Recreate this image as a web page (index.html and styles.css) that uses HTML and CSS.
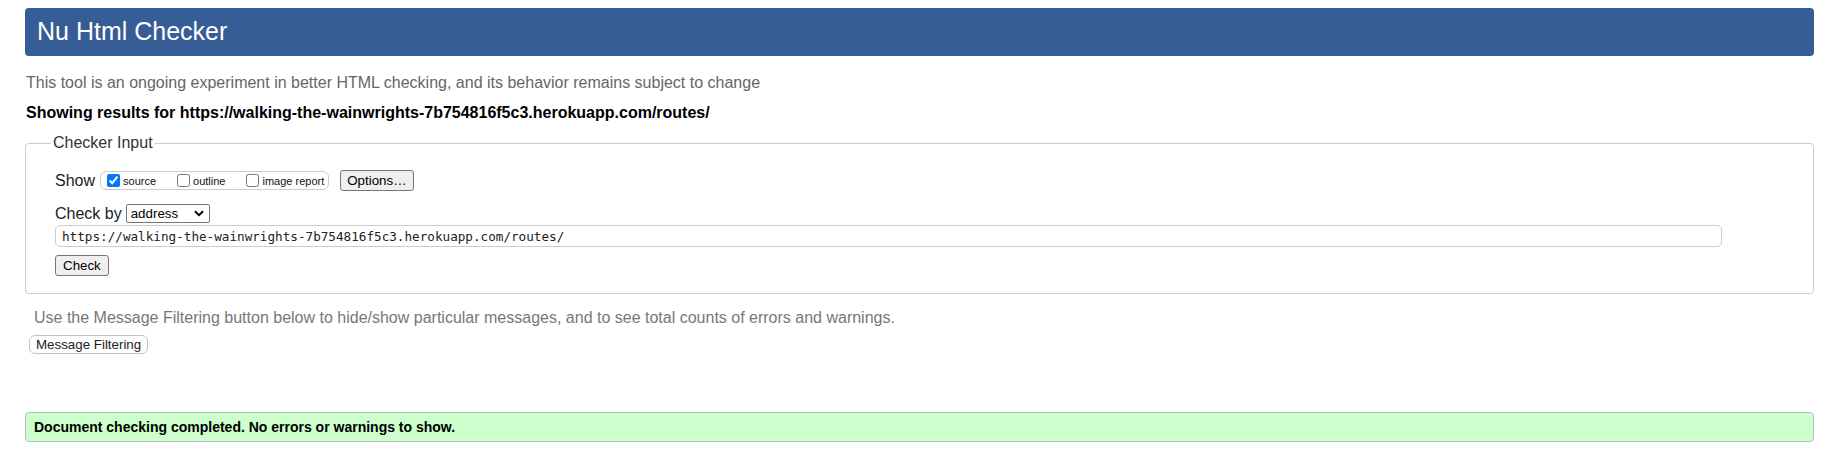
FILE: index.html
```html
<!DOCTYPE html>
<html lang="en">
<head>
<meta charset="utf-8">
<title>Nu Html Checker</title>
<link rel="stylesheet" href="styles.css">
</head>
<body>
<h1 class="title">Nu Html Checker</h1>
<p class="intro">This tool is an ongoing experiment in better HTML checking, and its behavior remains subject to change</p>
<p class="results">Showing results for https://walking-the-wainwrights-7b754816f5c3.herokuapp.com/routes/</p>
<form class="checker">
  <fieldset class="checker-fieldset">
    <legend class="checker-legend">Checker Input</legend>
    <div class="show-row">
      <span class="row-label">Show</span>
      <div class="check-group">
        <label class="check-item"><input class="check-box" type="checkbox" checked><span>source</span></label>
        <label class="check-item"><input class="check-box" type="checkbox"><span>outline</span></label>
        <label class="check-item"><input class="check-box" type="checkbox"><span>image report</span></label>
      </div>
      <button type="button" class="btn btn-options">Options…</button>
    </div>
    <div class="checkby-row">
      <label class="row-label" for="docselect">Check by</label>
      <span class="select-wrap">
        <select id="docselect" class="doc-select">
          <option>address</option>
          <option>file upload</option>
          <option>text input</option>
        </select>
        <svg class="select-chevron" width="10" height="7" viewBox="0 0 10 7"><path d="M1 1.2 L5 5.2 L9 1.2" fill="none" stroke="#000" stroke-width="2"/></svg>
      </span>
    </div>
    <div class="url-row">
      <input class="url-input" type="url" value="https://walking-the-wainwrights-7b754816f5c3.herokuapp.com/routes/">
    </div>
    <div class="submit-row">
      <button type="button" class="btn btn-check">Check</button>
    </div>
  </fieldset>
</form>
<p class="filter-note">Use the Message Filtering button below to hide/show particular messages, and to see total counts of errors and warnings.</p>
<button type="button" class="btn-filter">Message Filtering</button>
<div class="success">Document checking completed. No errors or warnings to show.</div>
</body>
</html>
```
FILE: styles.css
```css
* {
  box-sizing: border-box;
}

body {
  margin: 0;
  padding: 8px 33px 0 25px;
  font-family: "Liberation Sans", Arial, sans-serif;
  background: #fff;
  color: #000;
}

.title {
  margin: 0;
  height: 48px;
  line-height: 47px;
  padding-left: 12px;
  background: #365d95;
  color: #fff;
  font-size: 25px;
  font-weight: normal;
  border-radius: 4px;
}

.intro {
  margin: 18px 0 0 1px;
  font-size: 16px;
  color: #666;
}

.results {
  margin: 12px 0 0 1px;
  font-size: 16px;
  font-weight: bold;
  color: #000;
}

.checker {
  margin: 12px 0 0;
}

.checker-fieldset {
  margin: 0;
  min-width: 0;
  border: 1px solid #ccc;
  border-radius: 4px;
  padding: 18px 0 17px 29px;
}

.checker-legend {
  padding: 0 2px;
  margin-left: -4px;
  font-size: 16px;
  color: #333;
}

.row-label {
  font-size: 16px;
  color: #222;
}

.show-row {
  display: flex;
  align-items: center;
  height: 21px;
}

.show-row .row-label {
  margin-right: 5px;
}

.check-group {
  display: flex;
  align-items: center;
  height: 19px;
  padding: 0 4px 0 2px;
  border: 1px solid #ccc;
  border-radius: 6px;
  font-size: 11px;
  color: #111;
}

.check-item {
  display: flex;
  align-items: center;
  margin-right: 17px;
}

.check-item:last-child {
  margin-right: 0;
}

.check-box {
  width: 13px;
  height: 13px;
  margin: 0 3px 1px 4px;
}

.btn {
  font-family: "Liberation Sans", Arial, sans-serif;
  font-size: 13.333px;
  color: #000;
  background: #efefef;
  border: 1px solid #767676;
  border-radius: 3px;
  padding: 0 6px;
  height: 21px;
}

.btn-options {
  margin-left: 11px;
}

.btn-check {
  padding: 0 7px;
}

.checkby-row {
  display: flex;
  align-items: center;
  margin-top: 13px;
  height: 19px;
}

.checkby-row .row-label {
  margin-right: 4px;
}

.select-wrap {
  position: relative;
  display: inline-block;
  height: 19px;
}

.doc-select {
  appearance: none;
  -webkit-appearance: none;
  width: 84px;
  height: 19px;
  margin: 0;
  padding: 0 0 0 4px;
  border: 1px solid #767676;
  border-radius: 2px;
  background: #fff;
  font-family: "Liberation Sans", Arial, sans-serif;
  font-size: 13.333px;
  color: #000;
}

.select-chevron {
  position: absolute;
  right: 6px;
  top: 6px;
  pointer-events: none;
}

.url-row {
  margin-top: 2px;
}

.url-input {
  display: block;
  width: 94.85%;
  height: 22px;
  margin: 0;
  padding: 0 6px;
  border: 1px solid #ccc;
  border-radius: 5px;
  font-family: "DejaVu Sans Mono", "Liberation Mono", monospace;
  font-size: 12.65px;
  color: #222;
  background: #fff;
}

.submit-row {
  margin-top: 8px;
  display: flex;
}

.filter-note {
  margin: 15px 0 0 9px;
  font-size: 16px;
  color: #777;
}

.btn-filter {
  display: block;
  margin: 8px 0 0 4px;
  height: 19px;
  padding: 0 6px;
  border: 1px solid #c4c4c4;
  border-radius: 6px;
  background: #fff;
  font-family: "Liberation Sans", Arial, sans-serif;
  font-size: 13.333px;
  color: #222;
}

.success {
  margin-top: 58px;
  height: 30px;
  line-height: 28px;
  padding-left: 8px;
  border: 1px solid #bbb;
  border-radius: 4px;
  background: #ccffcc;
  font-size: 14px;
  font-weight: bold;
  color: #000;
}
```
